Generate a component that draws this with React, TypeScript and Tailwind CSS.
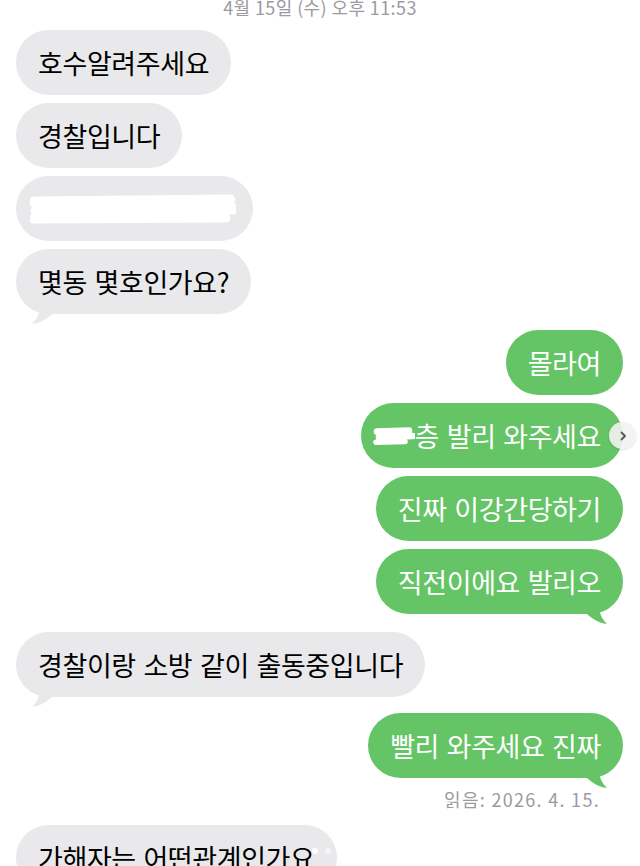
import type { ReactNode } from "react";

type Side = "left" | "right";

function Tail({ side }: { side: Side }) {
	if (side === "left") {
		return (
			<svg
				className="absolute left-[12px] bottom-[-12px]"
				width="30"
				height="22"
				viewBox="0 0 30 22"
			>
				<path d="M12 0 C 12 8, 10 14, 4 20 C 12 19, 20 15, 28 6 L 28 0 Z" fill="#e9e9eb" />
			</svg>
		);
	}
	return (
		<svg
			className="absolute right-[12px] bottom-[-12px]"
			width="30"
			height="22"
			viewBox="0 0 30 22"
		>
			<path d="M18 0 C 18 8, 20 14, 26 20 C 18 19, 10 15, 2 6 L 2 0 Z" fill="#65c466" />
		</svg>
	);
}

function Bubble({
	side,
	children,
	tail = false,
	className = "",
}: {
	side: Side;
	children: ReactNode;
	tail?: boolean;
	className?: string;
}) {
	const color =
		side === "left" ? "bg-[#e9e9eb] text-black self-start" : "bg-[#65c466] text-white self-end";
	return (
		<div
			className={`relative flex h-[65px] items-center rounded-[33px] px-[22px] text-[27px] leading-none tracking-[-0.4px] [word-spacing:2px] whitespace-nowrap ${color} ${className}`}
		>
			{tail && <Tail side={side} />}
			<span className="relative">{children}</span>
		</div>
	);
}

function Scribble({ width, height }: { width: number; height: number }) {
	return (
		<svg width={width} height={height} viewBox={`0 0 ${width} ${height}`}>
			<g stroke="#ffffff" strokeLinecap="round" fill="none">
				<path d={`M4 ${height * 0.3} L ${width - 6} ${height * 0.25}`} strokeWidth={height * 0.3} />
				<path d={`M6 ${height * 0.55} L ${width - 2} ${height * 0.5}`} strokeWidth={height * 0.3} />
				<path d={`M3 ${height * 0.78} L ${width - 10} ${height * 0.75}`} strokeWidth={height * 0.25} />
			</g>
		</svg>
	);
}

export default function App() {
	return (
		<div className="relative h-[866px] w-[640px] overflow-hidden bg-white font-['Noto_Sans_CJK_KR','Noto_Sans',sans-serif]">
			<div className="mt-[-3px] h-[20px] text-center text-[18px] leading-[20px] tracking-[0.4px] text-[#9a9a9f]">
				4월 15일 (수) 오후 11:53
			</div>

			<div className="flex flex-col pl-[16px] pr-[17px]">
				<Bubble side="left" className="mt-[13px]">
					호수알려주세요
				</Bubble>
				<Bubble side="left" className="mt-[8px]">
					경찰입니다
				</Bubble>
				<div className="mt-[8px] flex h-[65px] w-[237px] items-center rounded-[33px] bg-[#e9e9eb] pl-[14px] self-start">
					<Scribble width={206} height={36} />
				</div>
				<Bubble side="left" tail className="mt-[8px]">
					몇동 몇호인가요?
				</Bubble>

				<Bubble side="right" className="mt-[16px]">
					몰라여
				</Bubble>
				<div className="relative mt-[8px] flex h-[65px] items-center self-end rounded-[33px] bg-[#65c466] pl-[12px] pr-[22px] text-[27px] leading-none tracking-[-0.4px] [word-spacing:2px] whitespace-nowrap text-white">
					<Scribble width={42} height={22} />
					<span>층 발리 와주세요</span>
					<div className="absolute right-[-13px] top-[19px] flex h-[27px] w-[27px] items-center justify-center rounded-full bg-[#f2f2f2]/90 shadow-sm">
						<svg width="12" height="12" viewBox="0 0 12 12">
							<path d="M4.5 2.5 L8 6 L4.5 9.5" stroke="#555" strokeWidth="1.8" fill="none" strokeLinecap="round" strokeLinejoin="round" />
						</svg>
					</div>
				</div>
				<Bubble side="right" className="mt-[8px]">
					진짜 이강간당하기
				</Bubble>
				<Bubble side="right" tail className="mt-[8px]">
					직전이에요 발리오
				</Bubble>

				<Bubble side="left" tail className="mt-[18px]">
					경찰이랑 소방 같이 출동중입니다
				</Bubble>

				<Bubble side="right" tail className="mt-[16px]">
					빨리 와주세요 진짜
				</Bubble>
				<div className="mt-[11px] self-end pr-[23px] text-[18px] leading-[20px] tracking-[1.3px] text-[#9a9a9f]">
					읽음: 2026. 4. 15.
				</div>

				<div className="relative mt-[16px] self-start">
					<Bubble side="left">가해자는 어떤관계인가요</Bubble>
					<div className="absolute right-[6px] top-[23px] flex gap-[7px]">
						<span className="h-[6px] w-[6px] rounded-full bg-white/90" />
						<span className="h-[6px] w-[6px] rounded-full bg-white/60" />
					</div>
				</div>
			</div>
		</div>
	);
}
